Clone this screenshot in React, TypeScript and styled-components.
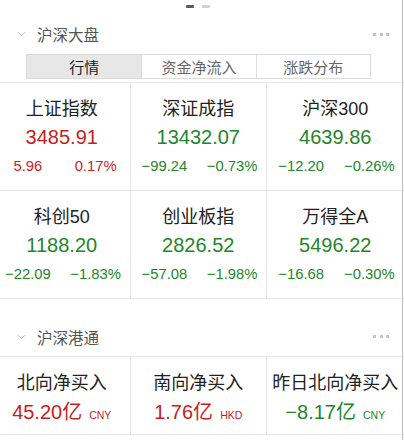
import React from "react";
import styled, { createGlobalStyle } from "styled-components";

const GlobalStyle = createGlobalStyle`
  html, body { margin: 0; padding: 0; background: #fff; }
  body { font-family: "Liberation Sans", "Noto Sans CJK SC", sans-serif; }
  * { box-sizing: border-box; }
`;

const RED = "#c81d22";
const GREEN = "#24862a";
const LINE = "#e6e6e6";

const Page = styled.div`
  width: 403px;
  min-height: 440px;
  border-right: 1px solid #bcbcbc;
  overflow: hidden;
  background: #fff;
`;

const Pager = styled.div`
  display: flex;
  justify-content: center;
  gap: 8px;
  height: 14px;
  padding-top: 5px;
  padding-right: 7px;
`;

const Dot = styled.span<{ $active?: boolean }>`
  width: 8px;
  height: 3px;
  border-radius: 1px;
  background: ${(p) => (p.$active ? "#5a5a5a" : "#d2d2d2")};
`;

const SectionHeader = styled.div<{ $gapTop?: number; $border?: boolean }>`
  display: flex;
  align-items: center;
  height: 40px;
  margin-top: ${(p) => p.$gapTop ?? 0}px;
  padding: 0 13px 0 17px;
  border-bottom: ${(p) => (p.$border ? `1px solid ${LINE}` : "none")};
`;

const Title = styled.span`
  margin-left: 11px;
  font-size: 15.5px;
  color: #555;
`;

const More = styled.div`
  margin-left: auto;
  display: flex;
  gap: 3.5px;
`;

const MoreDot = styled.span`
  width: 3px;
  height: 3px;
  background: #c4c4c4;
`;

const Tabs = styled.div`
  display: grid;
  grid-template-columns: repeat(3, 1fr);
  width: 345px;
  height: 25px;
  margin: 0 0 3px 26px;
  border: 1px solid #dcdcdc;
`;

const Tab = styled.div<{ $active?: boolean }>`
  display: flex;
  align-items: center;
  justify-content: center;
  font-size: 15px;
  color: ${(p) => (p.$active ? "#222" : "#666")};
  background: ${(p) => (p.$active ? "#e7e7e7" : "#fff")};
  & + & {
    border-left: 1px solid #dcdcdc;
  }
`;

const Grid = styled.div<{ $rowH: number; $noTop?: boolean }>`
  display: grid;
  grid-template-columns: repeat(3, 136.5px);
  grid-auto-rows: ${(p) => p.$rowH}px;
  margin-left: -6px;
  border-top: ${(p) => (p.$noTop ? "none" : `1px solid ${LINE}`)};
`;

const Cell = styled.div`
  display: flex;
  flex-direction: column;
  align-items: center;
  padding-top: 14px;
  border-bottom: 1px solid ${LINE};
  &:not(:nth-child(3n)) {
    border-right: 1px solid ${LINE};
  }
`;

const Name = styled.div`
  font-size: 18px;
  line-height: 24px;
  color: #222;
  white-space: nowrap;
`;

const Value = styled.div<{ $color: string; $mt?: number }>`
  font-size: 20px;
  line-height: ${(p) => (p.$mt ? 28 : 32)}px;
  margin-top: ${(p) => p.$mt ?? 0}px;
  color: ${(p) => p.$color};
  white-space: nowrap;
  display: flex;
  align-items: baseline;
`;

const Unit = styled.span`
  font-size: 10.5px;
  margin-left: 7px;
`;

const Changes = styled.div<{ $color: string }>`
  display: flex;
  width: 100%;
  margin-top: 3px;
  font-size: 14.8px;
  line-height: 20px;
  color: ${(p) => p.$color};
`;

const Change = styled.span`
  flex: 1;
  text-align: center;
  white-space: nowrap;
`;

const Chevron = () => (
  <svg width="9" height="6" viewBox="0 0 9 6" fill="none">
    <path d="M0.5 0.8 L4.5 4.8 L8.5 0.8" stroke="#b8b8b8" strokeWidth="1" />
  </svg>
);

const MoreIcon = () => (
  <More>
    <MoreDot />
    <MoreDot />
    <MoreDot />
  </More>
);

type Index = { name: string; value: string; chg: string; pct: string; up: boolean };

const indices: Index[] = [
  { name: "上证指数", value: "3485.91", chg: "5.96", pct: "0.17%", up: true },
  { name: "深证成指", value: "13432.07", chg: "−99.24", pct: "−0.73%", up: false },
  { name: "沪深300", value: "4639.86", chg: "−12.20", pct: "−0.26%", up: false },
  { name: "科创50", value: "1188.20", chg: "−22.09", pct: "−1.83%", up: false },
  { name: "创业板指", value: "2826.52", chg: "−57.08", pct: "−1.98%", up: false },
  { name: "万得全A", value: "5496.22", chg: "−16.68", pct: "−0.30%", up: false },
];

const flows = [
  { name: "北向净买入", value: "45.20亿", unit: "CNY", up: true },
  { name: "南向净买入", value: "1.76亿", unit: "HKD", up: true },
  { name: "昨日北向净买入", value: "−8.17亿", unit: "CNY", up: false },
];

export default function App() {
  return (
    <>
      <GlobalStyle />
      <Page>
        <Pager>
          <Dot $active />
          <Dot />
        </Pager>
        <SectionHeader>
          <Chevron />
          <Title>沪深大盘</Title>
          <MoreIcon />
        </SectionHeader>
        <Tabs>
          <Tab $active>行情</Tab>
          <Tab>资金净流入</Tab>
          <Tab>涨跌分布</Tab>
        </Tabs>
        <Grid $rowH={108}>
          {indices.map((it) => {
            const c = it.up ? RED : GREEN;
            return (
              <Cell key={it.name}>
                <Name>{it.name}</Name>
                <Value $color={c}>{it.value}</Value>
                <Changes $color={c}>
                  <Change>{it.chg}</Change>
                  <Change>{it.pct}</Change>
                </Changes>
              </Cell>
            );
          })}
        </Grid>
        <SectionHeader $gapTop={18} $border>
          <Chevron />
          <Title>沪深港通</Title>
          <MoreIcon />
        </SectionHeader>
        <Grid $rowH={78} $noTop>
          {flows.map((f) => {
            const c = f.up ? RED : GREEN;
            return (
              <Cell key={f.name}>
                <Name>{f.name}</Name>
                <Value $color={c} $mt={3}>
                  {f.value}
                  <Unit>{f.unit}</Unit>
                </Value>
              </Cell>
            );
          })}
        </Grid>
      </Page>
    </>
  );
}
